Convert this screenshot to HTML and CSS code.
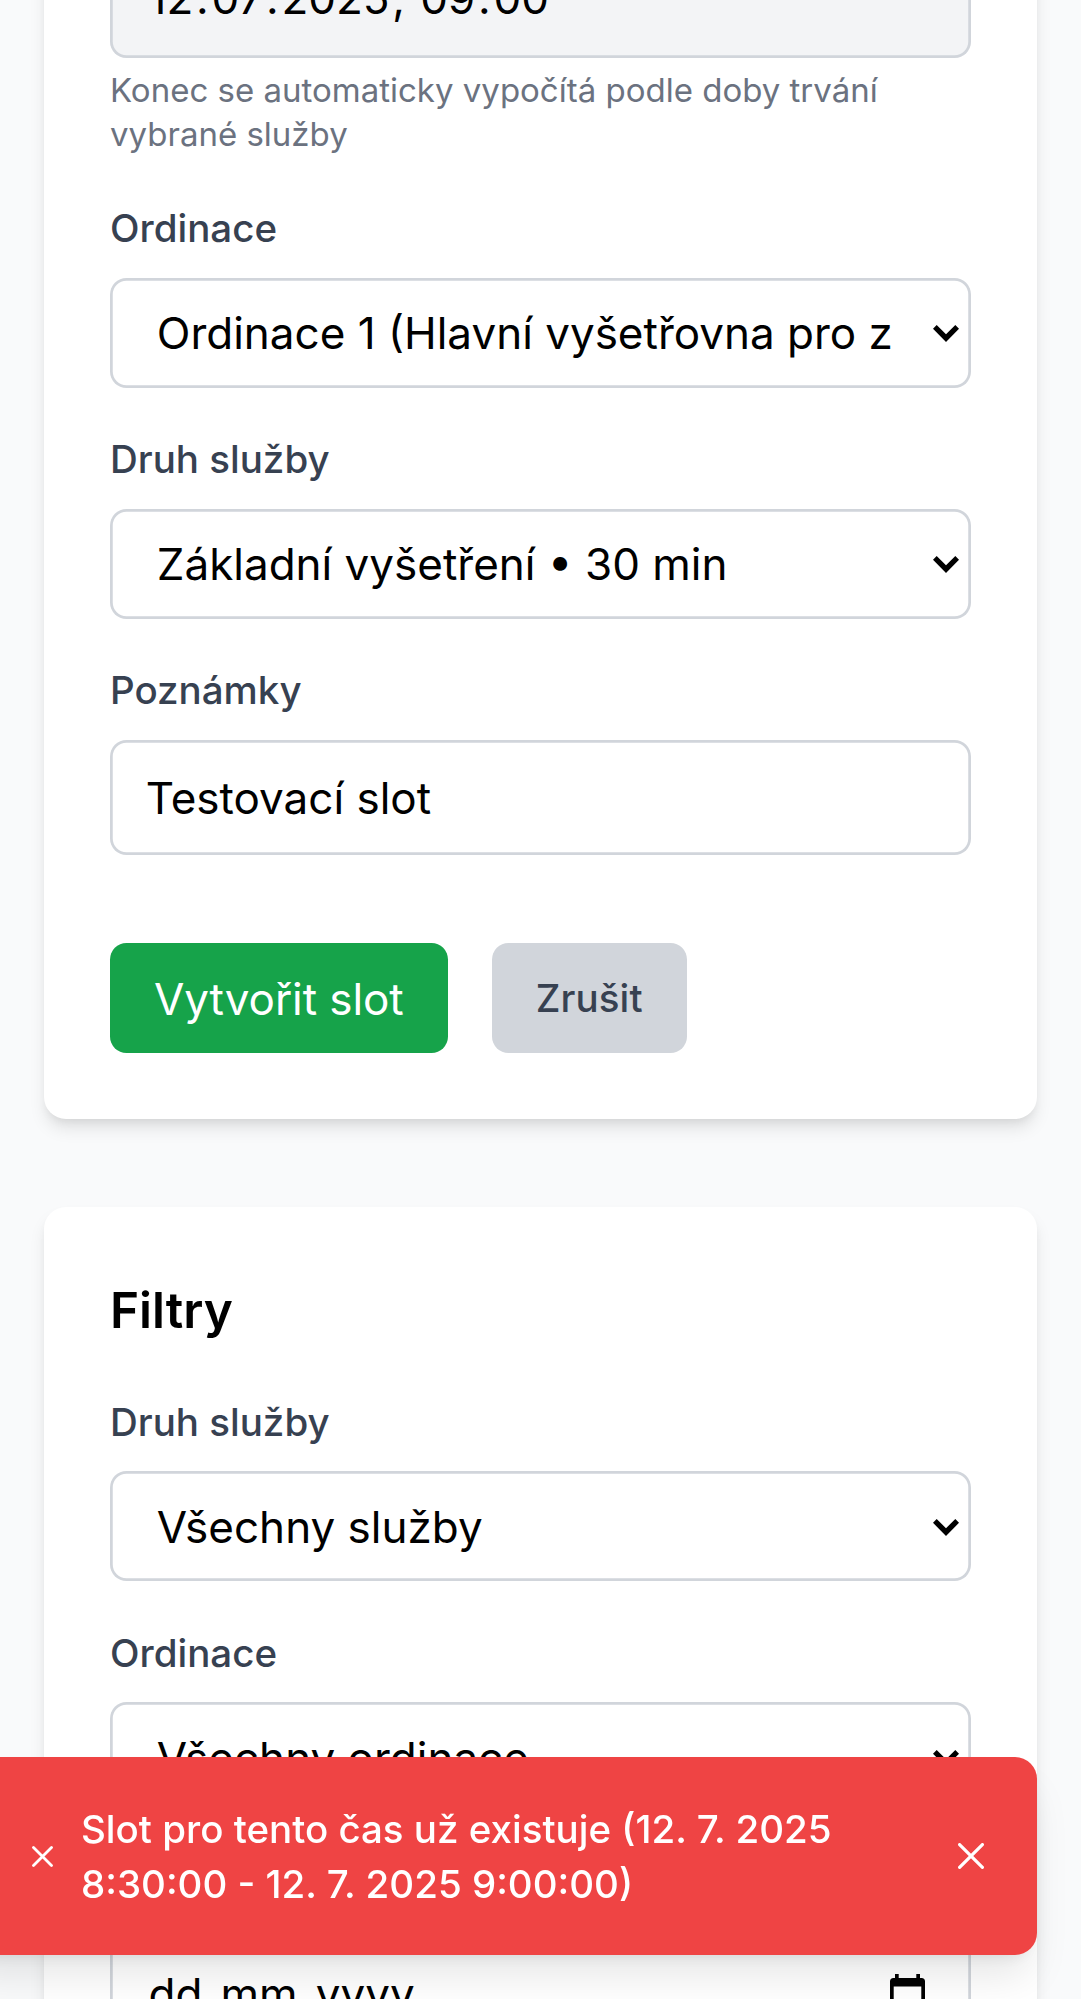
FILE: index.html
```html
<!DOCTYPE html>
<html lang="cs">
<head>
<meta charset="utf-8">
<title>Sloty</title>
<link rel="stylesheet" href="styles.css">
</head>
<body>
<main class="page">
  <section class="card">
    <div class="field">
      <div class="control input disabled"><span class="datetime"><span>12</span>.<span>07</span>.<span>2025</span>, <span>09</span>:<span>00</span></span></div>
      <p class="hint">Konec se automaticky vypočítá podle doby trvání vybrané služby</p>
    </div>
    <div class="field">
      <div class="label">Ordinace</div>
      <div class="control select"><span>Ordinace 1 (Hlavní vyšetřovna pro z</span><svg class="chevron" viewBox="0 0 26 17"><path d="M0 3.8 3.7 0 13 9.2 22.3 0 26 3.8 13 17z"/></svg></div>
    </div>
    <div class="field">
      <div class="label">Druh služby</div>
      <div class="control select"><span>Základní vyšetření • 30 min</span><svg class="chevron" viewBox="0 0 26 17"><path d="M0 3.8 3.7 0 13 9.2 22.3 0 26 3.8 13 17z"/></svg></div>
    </div>
    <div class="field">
      <div class="label">Poznámky</div>
      <div class="control input"><span>Testovací slot</span></div>
    </div>
    <div class="actions">
      <div class="button primary">Vytvořit slot</div>
      <div class="button secondary">Zrušit</div>
    </div>
  </section>

  <section class="card filters">
    <h2 class="title">Filtry</h2>
    <div class="field">
      <div class="label">Druh služby</div>
      <div class="control select"><span>Všechny služby</span><svg class="chevron" viewBox="0 0 26 17"><path d="M0 3.8 3.7 0 13 9.2 22.3 0 26 3.8 13 17z"/></svg></div>
    </div>
    <div class="field">
      <div class="label">Ordinace</div>
      <div class="control select"><span>Všechny ordinace</span><svg class="chevron" viewBox="0 0 26 17"><path d="M0 3.8 3.7 0 13 9.2 22.3 0 26 3.8 13 17z"/></svg></div>
    </div>
    <div class="field">
      <div class="label">Datum</div>
      <div class="control input date"><span class="datevalue"><span>dd</span>.<span>mm</span>.<span>yyyy</span></span><svg class="calendar" viewBox="0 0 35 39"><path fill-rule="evenodd" d="M5 0h3.7v4h17.6V0H30v4h1.500a3.500 3.500 0 0 1 3.500 3.500v28a3.500 3.500 0 0 1-3.500 3.500h-28A3.500 3.500 0 0 1 0 35.500v-28A3.500 3.500 0 0 1 3.500 4H5zM3.700 12.500v23h27.600v-23z"/></svg></div>
    </div>
  </section>
</main>

<div class="toast">
  <svg class="toast-icon" viewBox="0 0 21 21"><path d="M1.500 1.500l18 18M19.500 1.500l-18 18"/></svg>
  <p class="toast-text">Slot pro tento čas už existuje (12. 7. 2025 8:30:00 - 12. 7. 2025 9:00:00)</p>
  <svg class="toast-close" viewBox="0 0 26 26"><path d="M1.600 1.600l22.800 22.800M24.400 1.600L1.600 24.400"/></svg>
</div>
</body>
</html>
```
FILE: styles.css
```css
* {
  box-sizing: border-box;
  margin: 0;
}

html {
  font-size: 44px;
}

body {
  height: 1999px;
  overflow: hidden;
  background: #f9fafb;
  color: #000;
  font-family: Inter, "Liberation Sans", sans-serif;
}

.page {
  display: flex;
  flex-direction: column;
  gap: 2rem;
  margin-top: -123.75px;
  padding: 0 1rem;
}

.card {
  display: flex;
  flex-direction: column;
  gap: 1rem;
  padding: 1.5rem;
  border-radius: 0.5rem;
  background: #fff;
  box-shadow: 0 11px 16.5px -2.75px rgba(0, 0, 0, 0.1), 0 5.5px 11px -5.5px rgba(0, 0, 0, 0.1);
}

.title {
  height: 77px;
  font-size: 1.125rem;
  line-height: 75px;
  font-weight: 600;
}

.label {
  margin-bottom: 0.5rem;
  font-size: 0.875rem;
  line-height: 55px;
  font-weight: 500;
  color: #374151;
}

.control {
  display: flex;
  align-items: center;
  justify-content: space-between;
  border-radius: 16.5px;
  background: #fff;
  box-shadow: inset 0 0 0 2.75px #d1d5db;
  line-height: 66px;
  white-space: nowrap;
}

.input {
  height: 115.5px;
  padding: 0 35.75px;
}

.select {
  height: 110px;
  padding: 0 12px 0 46.75px;
}

.disabled {
  background: #f3f4f6;
}

.datetime {
  padding-bottom: 4px;
}

.datetime span,
.datevalue span {
  padding: 0 2.75px;
}

.chevron {
  width: 26px;
  height: 17px;
  margin-top: 2px;
}

.hint {
  margin: 10px 0 1px;
  font-size: 0.75rem;
  line-height: 44px;
  color: #6b7280;
}

.filters .label {
  padding-top: 1px;
  line-height: 54px;
}

.filters .select span {
  padding-top: 1px;
}

.actions {
  display: flex;
  gap: 1rem;
  margin-top: 1rem;
}

.button {
  height: 110px;
  padding: 0 1rem;
  border-radius: 16.5px;
  line-height: 110px;
}

.primary {
  background: #16a34a;
  color: #fff;
  line-height: 112px;
  letter-spacing: -0.07px;
}

.secondary {
  background: #d1d5db;
  color: #374151;
  font-size: 0.875rem;
  font-weight: 500;
  letter-spacing: 0.12px;
}

.datevalue {
  padding-top: 6px;
}

.calendar {
  width: 35px;
  height: 39px;
  margin-top: 4px;
  margin-right: 10px;
}

.toast {
  position: fixed;
  right: 44px;
  bottom: 43.75px;
  left: -44px;
  display: flex;
  align-items: center;
  height: 198px;
  padding: 0 53px 0 75.5px;
  border-radius: 22px;
  background: #ef4444;
  color: #fff;
  box-shadow: 0 27.5px 41.25px -8.25px rgba(0, 0, 0, 0.1), 0 11px 16.5px -11px rgba(0, 0, 0, 0.1);
}

.toast svg {
  flex: none;
  fill: none;
  stroke: #fff;
  stroke-linecap: round;
}

.toast-icon {
  width: 21px;
  height: 21px;
  stroke-width: 2.8;
}

.toast-text {
  flex: 1;
  margin-left: 28.5px;
  padding: 1px 100px 0 0;
  font-size: 0.875rem;
  line-height: 55px;
  font-weight: 500;
}

.toast-close {
  width: 26px;
  height: 26px;
  stroke-width: 3.2;
}
```
